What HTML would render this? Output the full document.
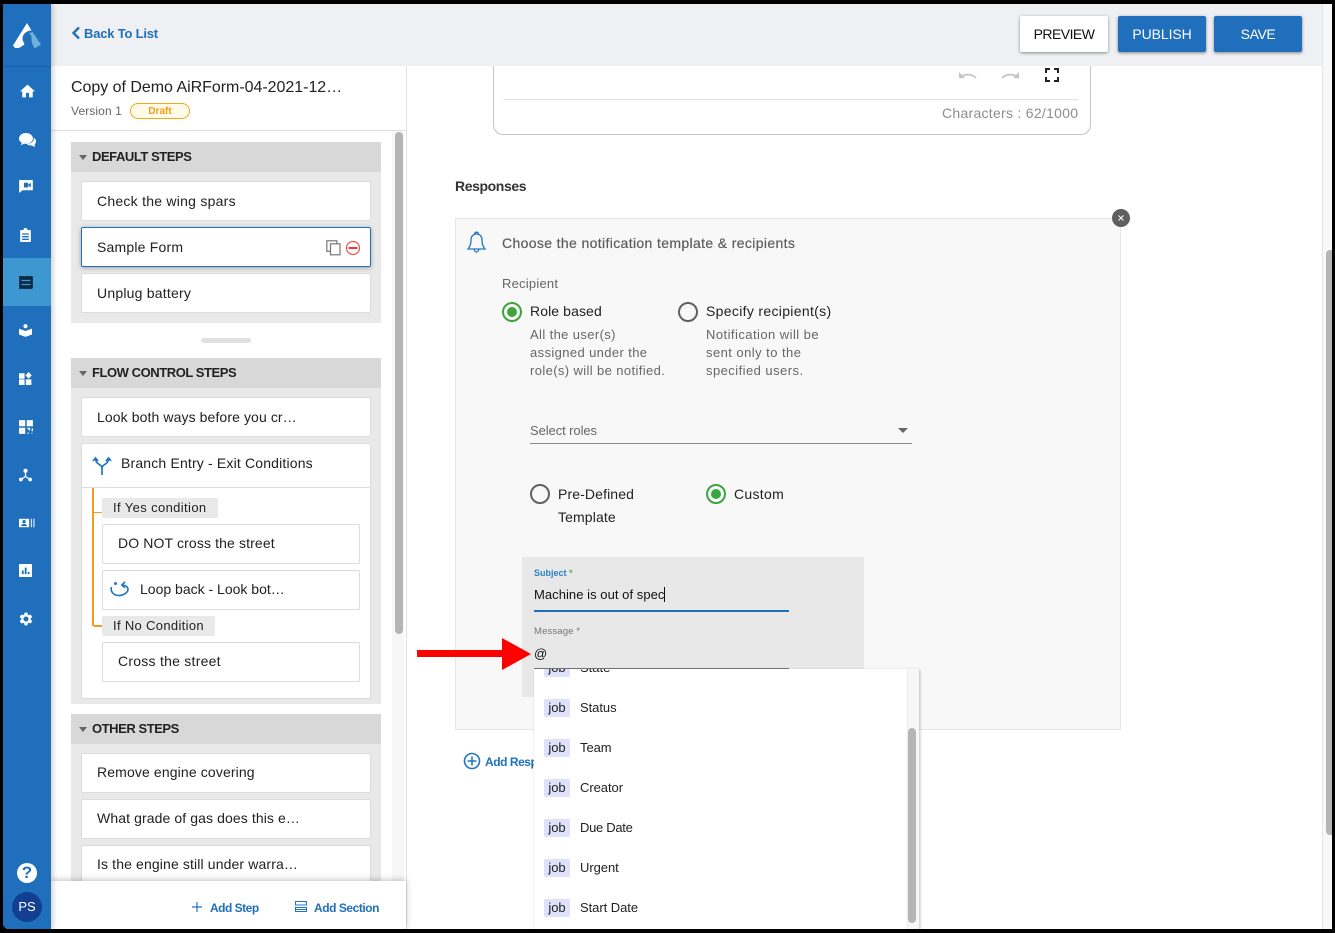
<!DOCTYPE html>
<html><head><meta charset="utf-8"><style>
*{box-sizing:border-box}
html,body{margin:0;padding:0;width:1335px;height:933px;overflow:hidden;background:#000;font-family:"Liberation Sans",sans-serif;color:#212121}
#p{position:absolute;left:3px;top:4px;width:1329px;height:925px;background:#fff;overflow:hidden;border-radius:0 0 0 6px}
.a{position:absolute;white-space:nowrap}
.t{position:absolute;white-space:nowrap;font-size:14px;line-height:18px}
.card{position:absolute;background:#fff;border:1px solid #dcdcdc;border-radius:2px;font-size:14px;line-height:38px;padding-left:15px;white-space:nowrap;color:#212121;letter-spacing:.15px}
.sec{position:absolute;left:68px;width:310px;height:30px;background:#d8d8d8;font-size:13px;font-weight:bold;line-height:29px;padding-left:21px;color:#222;letter-spacing:-.44px}
.sec:before{content:"";position:absolute;left:8px;top:13px;border:4.5px solid transparent;border-top:5px solid #666;border-bottom:0}
.bg{position:absolute;left:68px;width:310px;background:#e9e9e9}
.nav{position:absolute;fill:#fff}
.cond{position:absolute;left:99px;height:20px;background:#e9e9e9;font-size:13px;line-height:20px;padding-left:11px;border-radius:2px;color:#222;letter-spacing:.38px}
.job{position:absolute;left:541px;width:26px;height:18px;background:#dde1fa;border-radius:2px;font-size:13px;line-height:18px;text-align:center;color:#222}
.opt{position:absolute;left:577px;font-size:13px;line-height:18px;color:#222;white-space:nowrap;letter-spacing:-.05px}
</style></head><body><div id="p">
<!-- header -->
<div class="a" style="left:48px;top:0;width:1271px;height:62px;background:#eff0f4"></div>
<svg class="a" style="left:68px;top:22px" width="10" height="14" viewBox="0 0 10 14"><path d="M8 1.500L2.500 7L8 12.500" fill="none" stroke="#1f6fbd" stroke-width="2.400"/></svg>
<div class="t" style="left:81px;top:21px;color:#1f6fbd;font-weight:bold;font-size:13px;letter-spacing:-.2px">Back To List</div>
<div class="a" style="left:1017px;top:12px;width:88px;height:36px;background:#fff;border-radius:2px;box-shadow:0 1px 3px rgba(0,0,0,.45);text-align:center;line-height:37px;font-size:14px;color:#111;letter-spacing:-.55px">PREVIEW</div>
<div class="a" style="left:1115px;top:12px;width:88px;height:36px;background:#1f6fbd;border-radius:2px;box-shadow:0 1px 3px rgba(0,0,0,.45);text-align:center;line-height:37px;font-size:14px;color:#fff;letter-spacing:-.1px">PUBLISH</div>
<div class="a" style="left:1211px;top:12px;width:88px;height:36px;background:#1f6fbd;border-radius:2px;box-shadow:0 1px 3px rgba(0,0,0,.45);text-align:center;line-height:37px;font-size:14px;color:#fff;letter-spacing:-.4px">SAVE</div>

<!-- rail -->
<div class="a" style="left:0;top:0;width:48px;height:925px;background:#1f6fbd;box-shadow:2px 0 5px rgba(0,0,0,.2);z-index:5">
<div class="a" style="left:0;top:62px;width:48px;height:1px;background:#1a60a5"></div>
<div class="a" style="left:0;top:254px;width:48px;height:48px;background:#3f97d2"></div>
<svg class="a" style="left:10px;top:19px" width="28" height="26" viewBox="0 0 28 26"><path d="M14 0L18.500 7.500C14.500 7.500 9.500 10.500 9.500 15.500C9.500 18 11 19.500 11.500 21.500L6 25H2L0 22.500Z" fill="#fff"/><path d="M19.500 9L28 21.500L21.500 25.500C20 22 18.500 20.500 18.500 15.500C18.500 13 18 11 15.500 10.500Z" fill="#6fb1dc"/></svg>
<svg class="nav" style="left:17px;top:80px" width="15" height="14" viewBox="2 3 20 17"><path d="M10 20v-6h4v6h5v-8h3L12 3 2 12h3v8z"/></svg>
<svg class="nav" style="left:16px;top:129px" width="17" height="14" viewBox="1 3 22 18"><ellipse cx="10" cy="10" rx="9" ry="7"/><path d="M5 15l-2 4 6-3z"/><path d="M20 9c2 1 3 3 3 5s-1 3-2 4l1 3-5-2c-2 0-4 0-6-2 6 0 10-3 9-8z"/></svg>
<svg class="nav" style="left:16px;top:176px" width="14" height="13" viewBox="2 3 20 19"><path d="M3 3h18a1 1 0 0 1 1 1v13a1 1 0 0 1-1 1H7l-5 4V4a1 1 0 0 1 1-1z"/><path d="M9 7h6v7H9zM15 10l4-3v7l-4-3z" fill="#1f6fbd"/></svg>
<svg class="nav" style="left:16px;top:224px" width="13" height="14" viewBox="4 1 16 21"><path d="M5 4h4a3 3 0 0 1 6 0h4a1 1 0 0 1 1 1v16a1 1 0 0 1-1 1H5a1 1 0 0 1-1-1V5a1 1 0 0 1 1-1z"/><path d="M7 9h10v2H7zM7 13h10v2H7zM7 17h10v2H7z" fill="#1f6fbd"/></svg>
<svg class="a" style="left:16px;top:272px" width="14" height="13" viewBox="0 0 14 13"><rect x=".5" y=".5" width="13" height="12" fill="#0c2a45" stroke="#0a1f33" stroke-dasharray="1 .7"/><path d="M2.500 4.500h9M2.500 8.500h9" stroke="#3f97d2" stroke-width="1.200"/></svg>
<svg class="nav" style="left:16px;top:319px" width="13" height="15" viewBox="1 1.500 22 21.500"><circle cx="12" cy="5" r="3.500"/><path d="M1 9l11 4 11-4v10l-11 4-11-4z"/></svg>
<svg class="nav" style="left:16px;top:368px" width="13" height="13" viewBox="2 1 21 21"><path d="M2 3h9v9H2zM2 13h9v9H2zM13 13h9v9h-9zM17.500 1l5 5.500-5 5.500-5-5.500z"/></svg>
<svg class="nav" style="left:16px;top:416px" width="14" height="14" viewBox="2 2 20 20" fill="none" stroke="#fff" stroke-width="1.800"><path d="M3 3h7v7H3zM14 3h7v7h-7zM3 14h7v7H3zM14 14h3v3M21 14v4M14 21h2M20 21h1"/><path d="M5.500 5.500h2v2h-2zM16.500 5.500h2v2h-2zM5.500 16.500h2v2h-2z" fill="#cfe1f2" stroke="none"/></svg>
<svg class="nav" style="left:16px;top:464px" width="13" height="14" viewBox="1.500 2.500 21 20.500"><circle cx="12" cy="6" r="3.300"/><path d="M12 8v7L5 20M12 15l7 5" stroke="#fff" stroke-width="2" fill="none"/><circle cx="4.500" cy="20" r="3"/><circle cx="19.500" cy="20" r="3"/></svg>
<svg class="a" style="left:16px;top:514px" width="16" height="10" viewBox="0 2 19 10"><path d="M0 2h12v10H0z" fill="#fff"/><circle cx="6" cy="5.500" r="2" fill="#1f6fbd"/><path d="M2.500 10.500c0-3 7-3 7 0z" fill="#1f6fbd"/><path d="M14 2h1.500v10H14zM17 2h1.500v10H17z" fill="#cfe1f2"/></svg>
<svg class="nav" style="left:16px;top:560px" width="13" height="13" viewBox="3 3 18 18"><path d="M4 3h16a1 1 0 0 1 1 1v16a1 1 0 0 1-1 1H4a1 1 0 0 1-1-1V4a1 1 0 0 1 1-1z"/><path d="M7 12h2.500v5H7zM11 8h2.500v9H11zM15 14h2.500v3H15z" fill="#1f6fbd"/></svg>
<svg class="nav" style="left:16px;top:608px" width="14" height="14" viewBox="2.400 2.500 19.200 19"><path d="M19.400 13a7.500 7.500 0 0 0 0-2l2.100-1.600-2-3.500-2.500 1a7.500 7.500 0 0 0-1.700-1L15 3.300h-4l-.4 2.600a7.500 7.500 0 0 0-1.700 1l-2.500-1-2 3.500L6.500 11a7.500 7.500 0 0 0 0 2l-2.100 1.600 2 3.500 2.500-1a7.500 7.500 0 0 0 1.700 1l.4 2.600h4l.4-2.600a7.500 7.500 0 0 0 1.700-1l2.500 1 2-3.500zM13 15.500a3.500 3.500 0 1 1 0-7 3.500 3.500 0 0 1 0 7z" transform="translate(-1 0)"/></svg>
<div class="a" style="left:14px;top:859px;width:20px;height:20px;border-radius:50%;background:#fff;color:#1f6fbd;font-weight:bold;font-size:17px;line-height:20px;text-align:center">?</div>
<div class="a" style="left:9px;top:888px;width:30px;height:30px;border-radius:50%;background:#123f91;color:#fff;font-size:13px;line-height:30px;text-align:center">PS</div>
</div>

<!-- left panel -->
<div class="a" style="left:403px;top:62px;width:1px;height:863px;background:#e0e0e0"></div>
<div class="a" style="left:68px;top:74px;font-size:16px;line-height:20px;color:#212121;letter-spacing:-.03px">Copy of Demo AiRForm-04-2021-12…</div>
<div class="a" style="left:68px;top:98px;font-size:12px;line-height:18px;color:#666;letter-spacing:.1px">Version 1</div>
<div class="a" style="left:127px;top:99px;width:60px;height:16px;border:1px solid #f5a623;border-radius:8px;background:#fffbe6;color:#f39c1f;font-size:10px;font-weight:bold;line-height:16px;text-align:center">Draft</div>
<div class="a" style="left:48px;top:126px;width:355px;height:1px;background:#ddd"></div>
<div class="a" style="left:389px;top:127px;width:12px;height:798px;background:#f7f7f7"></div>
<div class="a" style="left:392px;top:128px;width:8px;height:502px;background:#b5b5b5;border-radius:4px"></div>

<div class="sec" style="top:138px">DEFAULT STEPS</div>
<div class="bg" style="top:168px;height:151px"></div>
<div class="card" style="left:78px;top:177px;width:290px;height:40px;letter-spacing:.25px">Check the wing spars</div>
<div class="card" style="left:78px;top:223px;width:290px;height:40px;border-color:#1f6fbd;box-shadow:0 1px 5px rgba(0,0,0,.3);letter-spacing:.2px">Sample Form</div>
<svg class="a" style="left:323px;top:236px" width="16" height="16" viewBox="0 0 16 16" fill="#fff" stroke="#777" stroke-width="1.200"><rect x=".8" y=".8" width="10" height="10.500"/><rect x="4.500" y="3.800" width="9.500" height="11"/></svg>
<svg class="a" style="left:342px;top:236px" width="16" height="16" viewBox="0 0 16 16"><circle cx="8" cy="8" r="6.500" fill="none" stroke="#ef5350" stroke-width="1.200"/><rect x="3.500" y="7" width="9" height="2" fill="#e53935"/></svg>
<div class="card" style="left:78px;top:269px;width:290px;height:40px;letter-spacing:.22px">Unplug battery</div>
<div class="a" style="left:198px;top:334px;width:50px;height:5px;background:#e0e0e0;border-radius:3px"></div>

<div class="sec" style="top:354px">FLOW CONTROL STEPS</div>
<div class="bg" style="top:384px;height:316px"></div>
<div class="card" style="left:78px;top:393px;width:290px;height:40px;letter-spacing:.1px">Look both ways before you cr…</div>
<div class="a" style="left:78px;top:439px;width:290px;height:256px;background:#fff;border:1px solid #dcdcdc;border-radius:2px"></div>
<div class="a" style="left:78px;top:483px;width:290px;height:1px;background:#dcdcdc"></div>
<svg class="a" style="left:89px;top:452px" width="20" height="20" viewBox="0 0 20 20" fill="none" stroke="#1f75c4" stroke-width="1.700"><path d="M10 19v-7C10 8 3.500 9 3.500 2M10 12C10 8 16.500 9 16.500 2"/><path d="M1 5l2.500-3 2.500 3M14 5l2.500-3 2.500 3"/></svg>
<div class="t" style="left:118px;top:450px;letter-spacing:.17px">Branch Entry - Exit Conditions</div>
<div class="a" style="left:89px;top:484px;width:2px;height:138px;background:#f39c1f"></div>
<div class="a" style="left:91px;top:508px;width:8px;height:1px;background:#f39c1f"></div>
<div class="a" style="left:91px;top:621px;width:8px;height:2px;background:#f39c1f"></div>
<div class="cond" style="top:494px;width:116px">If Yes condition</div>
<div class="card" style="left:99px;top:520px;width:258px;height:40px;line-height:36px;letter-spacing:.13px">DO NOT cross the street</div>
<div class="card" style="left:99px;top:566px;width:258px;height:40px;padding-left:37px;line-height:36px;letter-spacing:0">Loop back - Look bot…</div>
<svg class="a" style="left:106px;top:577px" width="21" height="16" viewBox="0 0 21 16" fill="none" stroke="#1f75c4" stroke-width="1.600"><path d="M2.500 6C1 11 5 14.500 10 14.500S19 11 19 8.500C19 5.500 16 4 13 4"/><path d="M16 .8L12.800 4 16 6.800"/><circle cx="6.500" cy="2.500" r="1.500" fill="#1f75c4" stroke="none"/></svg>
<div class="cond" style="top:612px;width:113px;letter-spacing:.33px">If No Condition</div>
<div class="card" style="left:99px;top:638px;width:258px;height:40px;line-height:36px;letter-spacing:.25px">Cross the street</div>

<div class="sec" style="top:710px">OTHER STEPS</div>
<div class="bg" style="top:740px;height:160px"></div>
<div class="card" style="left:78px;top:749px;width:290px;height:40px;line-height:36px;letter-spacing:.13px">Remove engine covering</div>
<div class="card" style="left:78px;top:795px;width:290px;height:40px;line-height:36px;letter-spacing:.1px">What grade of gas does this e…</div>
<div class="card" style="left:78px;top:841px;width:290px;height:40px;line-height:36px;letter-spacing:.13px">Is the engine still under warra…</div>
<div class="a" style="left:48px;top:877px;width:355px;height:48px;background:#fff;box-shadow:0 -1px 6px rgba(0,0,0,.25)"></div>
<svg class="a" style="left:188px;top:897px" width="12" height="12"><path d="M6 1v10M1 6h10" stroke="#1f75c4" stroke-width="1.200"/></svg>
<div class="t" style="left:207px;top:895px;color:#1f6fbd;font-size:12px;font-weight:bold;letter-spacing:-.5px">Add Step</div>
<svg class="a" style="left:292px;top:897px" width="12" height="11"><path d="M.5.500h11v3.500H.500zM.5 6.500h11v4H.500z M.5 8.500h11" fill="none" stroke="#1f75c4"/></svg>
<div class="t" style="left:311px;top:895px;color:#1f6fbd;font-size:12px;font-weight:bold;letter-spacing:-.45px">Add Section</div>

<!-- editor box -->
<div class="a" style="left:490px;top:62px;width:598px;height:69px;border:1px solid #c4c4c4;border-top:0;border-radius:0 0 10px 10px"></div>
<svg class="a" style="left:955px;top:66px" width="20" height="10" viewBox="0 0 20 10"><path d="M2 8c3-4 11-5 16 0" fill="none" stroke="#c4c4c4" stroke-width="1.700"/><path d="M1 2v6h6z" fill="#c4c4c4"/></svg>
<svg class="a" style="left:997px;top:66px" width="20" height="10" viewBox="0 0 20 10"><path d="M18 8c-3-4-11-5-16 0" fill="none" stroke="#c4c4c4" stroke-width="1.700"/><path d="M19 2v6h-6z" fill="#c4c4c4"/></svg>
<svg class="a" style="left:1042px;top:64px" width="14" height="14" viewBox="0 0 14 14"><path d="M1 5V1h4M9 1h4v4M13 9v4H9M5 13H1V9" fill="none" stroke="#222" stroke-width="2"/></svg>
<div class="a" style="left:500px;top:95px;width:575px;height:1px;background:#e2e2e2"></div>
<div class="t" style="left:939px;top:100px;color:#8e8e8e;letter-spacing:.28px">Characters : 62/1000</div>
<div class="t" style="left:452px;top:173px;font-weight:bold;font-size:14px;color:#333;letter-spacing:-.4px">Responses</div>

<!-- response card -->
<div class="a" style="left:452px;top:214px;width:666px;height:512px;background:#f8f8f8;border:1px solid #e6e6e6"></div>
<div class="a" style="left:1109px;top:205px;width:18px;height:18px;border-radius:50%;background:#5f5f5f"></div>
<svg class="a" style="left:1109px;top:205px" width="18" height="18"><path d="M6.500 6.500l5 5M11.500 6.500l-5 5" stroke="#fff" stroke-width="1"/></svg>
<svg class="a" style="left:464px;top:227px" width="19" height="23" viewBox="0 0 19 23" fill="none" stroke="#1f75c4" stroke-width="1.300"><path d="M9.500 3c-3.500 0-5.500 2.500-5.500 6 0 5-1.500 7-3 9h17c-1.500-2-3-4-3-9 0-3.500-2-6-5.500-6z"/><path d="M7.700 3c0-2.400 3.600-2.400 3.600 0M7.300 18c0 4 4.400 4 4.400 0"/></svg>
<div class="t" style="left:499px;top:230px;color:#5c5c5c;letter-spacing:.36px;-webkit-text-stroke:.2px #5c5c5c">Choose the notification template &amp; recipients</div>
<div class="t" style="left:499px;top:271px;color:#666;font-size:13px;letter-spacing:.22px">Recipient</div>

<svg class="a" style="left:498px;top:297px" width="22" height="22"><circle cx="11" cy="11" r="9" fill="none" stroke="#3ba53f" stroke-width="2"/><circle cx="11" cy="11" r="5" fill="#3ba53f"/></svg>
<div class="t" style="left:527px;top:298px;letter-spacing:.1px">Role based</div>
<div class="a" style="left:527px;top:322px;font-size:13px;line-height:18px;color:#666;letter-spacing:.38px">All the user(s)<br>assigned under the<br>role(s) will be notified.</div>
<svg class="a" style="left:674px;top:297px" width="22" height="22"><circle cx="11" cy="11" r="9" fill="none" stroke="#616161" stroke-width="2"/></svg>
<div class="t" style="left:703px;top:298px;letter-spacing:.32px">Specify recipient(s)</div>
<div class="a" style="left:703px;top:322px;font-size:13px;line-height:18px;color:#666;letter-spacing:.45px">Notification will be<br>sent only to the<br>specified users.</div>

<div class="t" style="left:527px;top:418px;font-size:13px;color:#666;letter-spacing:-.08px">Select roles</div>
<div class="a" style="left:527px;top:439px;width:382px;height:1px;background:#8a8a8a"></div>
<div class="a" style="left:895px;top:424px;border:5px solid transparent;border-top:5px solid #666;border-bottom:0"></div>

<svg class="a" style="left:526px;top:479px" width="22" height="22"><circle cx="11" cy="11" r="9" fill="none" stroke="#616161" stroke-width="2"/></svg>
<div class="a" style="left:555px;top:479px;font-size:14px;line-height:23px;letter-spacing:.12px">Pre-Defined<br>Template</div>
<svg class="a" style="left:702px;top:479px" width="22" height="22"><circle cx="11" cy="11" r="9" fill="none" stroke="#3ba53f" stroke-width="2"/><circle cx="11" cy="11" r="5" fill="#3ba53f"/></svg>
<div class="t" style="left:731px;top:481px;letter-spacing:.3px">Custom</div>

<div class="a" style="left:519px;top:553px;width:342px;height:140px;background:#e8e8e8"></div>
<div class="a" style="left:531px;top:563px;font-size:9px;line-height:12px;font-weight:bold;color:#2b80c8">Subject <span style="color:#5cb85c">*</span></div>
<div class="t" style="left:531px;top:582px;font-size:13px;color:#111;letter-spacing:.05px">Machine is out of spec<span style="border-left:1px solid #111"></span></div>
<div class="a" style="left:531px;top:606px;width:255px;height:2px;background:#1f6fbd"></div>
<div class="a" style="left:531px;top:622px;font-size:9.500px;line-height:12px;color:#777;letter-spacing:.15px">Message *</div>
<div class="t" style="left:531px;top:641px;font-size:13px;color:#111">@</div>
<div class="a" style="left:531px;top:664px;width:255px;height:1px;background:#777"></div>

<!-- arrow -->
<svg class="a" style="left:414px;top:634px;z-index:3" width="116" height="32"><path d="M0 12h85V0l29 16-29 16V19H0z" fill="#f00"/></svg>

<!-- add response -->
<svg class="a" style="left:460px;top:748px" width="18" height="18" viewBox="0 0 18 18" fill="none" stroke="#1f75c4" stroke-width="1.600"><circle cx="9" cy="9" r="7.500"/><path d="M9 4.500v9M4.500 9h9"/></svg>
<div class="t" style="left:482px;top:749px;color:#1f6fbd;font-size:12px;font-weight:bold;letter-spacing:-.45px">Add Response</div>

<!-- dropdown -->
<div class="a" style="left:531px;top:665px;width:385px;height:260px;background:#fff;box-shadow:1px 1px 3px rgba(0,0,0,.25);overflow:hidden">
<div class="a" style="left:10px;top:-10px;width:26px;height:18px;background:#dde1fa;border-radius:2px;font-size:13px;line-height:18px;text-align:center;color:#222">job</div>
<div class="a" style="left:46px;top:-10px;font-size:13px;line-height:18px;color:#222">State</div>
<div class="a" style="left:373px;top:0;width:13px;height:260px;background:#f7f7f7;border-left:1px solid #ececec"></div>
<div class="a" style="left:374px;top:59px;width:8px;height:195px;background:#b5b5b5;border-radius:4px"></div>
</div>
<div class="job" style="top:695px">job</div><div class="opt" style="top:695px">Status</div>
<div class="job" style="top:735px">job</div><div class="opt" style="top:735px">Team</div>
<div class="job" style="top:775px">job</div><div class="opt" style="top:775px">Creator</div>
<div class="job" style="top:815px">job</div><div class="opt" style="top:815px;letter-spacing:-.3px">Due Date</div>
<div class="job" style="top:855px">job</div><div class="opt" style="top:855px">Urgent</div>
<div class="job" style="top:895px">job</div><div class="opt" style="top:895px">Start Date</div>

<!-- main scrollbar -->
<div class="a" style="left:1319px;top:0;width:10px;height:925px;background:#f8f8f8;border-left:1px solid #e6e6e6"></div>
<div class="a" style="left:1323px;top:246px;width:6px;height:585px;background:#b5b5b5;border-radius:4px 0 0 4px"></div>
</div></body></html>
